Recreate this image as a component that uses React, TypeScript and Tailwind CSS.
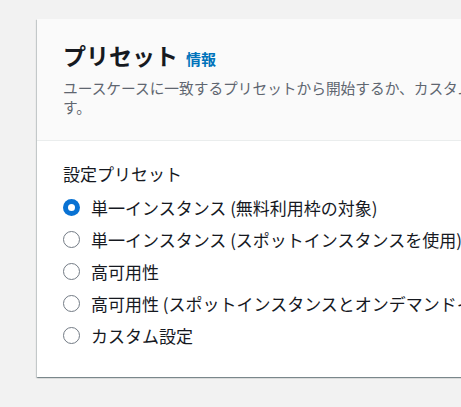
const font = { fontFamily: '"Noto Sans CJK JP", "Noto Sans", sans-serif' };

const presets = [
  { label: "単一インスタンス (無料利用枠の対象)", checked: true },
  { label: "単一インスタンス (スポットインスタンスを使用)", checked: false },
  { label: "高可用性", checked: false },
  { label: "高可用性 (スポットインスタンスとオンデマンドインスタンス)", checked: false },
  { label: "カスタム設定", checked: false },
];

function Radio({ checked }: { checked: boolean }) {
  if (checked) {
    return (
      <span className="w-[17px] h-[17px] rounded-full bg-[#0972d3] flex items-center justify-center shrink-0">
        <span className="w-[7px] h-[7px] rounded-full bg-white" />
      </span>
    );
  }
  return <span className="w-[17px] h-[17px] rounded-full border-[1.5px] border-[#737b85] bg-white shrink-0" />;
}

export default function App() {
  return (
    <div
      className="w-[461px] h-[407px] overflow-hidden bg-[#f2f2f2] pt-[19px] pl-[37px]"
      style={font}
    >
      <div className="w-[720px] bg-white shadow-[0_1px_1px_0_rgba(0,28,36,0.3),1px_1px_1px_0_rgba(0,28,36,0.15),-1px_1px_1px_0_rgba(0,28,36,0.15)]">
        {/* Header */}
        <div className="bg-[#fafafa] border-b border-[#eaeded] px-[26px] pt-[21px] pb-[24px]">
          <div className="flex items-baseline gap-[8px]">
            <h2 className="text-[23px] leading-[30px] font-bold text-[#16191f]">プリセット</h2>
            <span className="text-[15px] font-bold text-[#0073bb]">情報</span>
          </div>
          <p className="mt-[7px] text-[14.7px] leading-[19px] text-[#5f6670] whitespace-nowrap">
            ユースケースに一致するプリセットから開始するか、カスタム設定を選択してサーバーを構成しま
            <br />
            す。
          </p>
        </div>

        {/* Body */}
        <div className="px-[26px] pt-[21px] pb-[25px]">
          <div className="text-[17px] leading-[24px] text-[#16191f]">設定プリセット</div>
          <div className="mt-[6px] flex flex-col">
            {presets.map((p) => (
              <label key={p.label} className="h-8 flex items-center gap-[11px]">
                <Radio checked={p.checked} />
                <span className="text-[17px] text-[#16191f] whitespace-nowrap">{p.label}</span>
              </label>
            ))}
          </div>
        </div>
      </div>
    </div>
  );
}
